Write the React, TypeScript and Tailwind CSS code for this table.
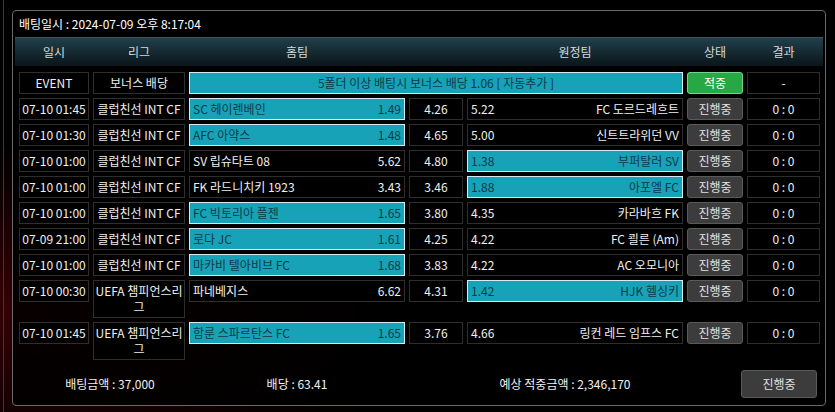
import React from "react";

type Row = {
  time: string;
  league: string;
  home: string;
  homeOdd: string;
  draw: string;
  away: string;
  awayOdd: string;
  pick: "home" | "away";
};

const rows: Row[] = [
  { time: "07-10 01:45", league: "클럽친선 INT CF", home: "SC 헤이렌베인", homeOdd: "1.49", draw: "4.26", away: "FC 도르드레흐트", awayOdd: "5.22", pick: "home" },
  { time: "07-10 01:30", league: "클럽친선 INT CF", home: "AFC 아약스", homeOdd: "1.48", draw: "4.65", away: "신트트라위던 VV", awayOdd: "5.00", pick: "home" },
  { time: "07-10 01:00", league: "클럽친선 INT CF", home: "SV 립슈타트 08", homeOdd: "5.62", draw: "4.80", away: "부퍼탈러 SV", awayOdd: "1.38", pick: "away" },
  { time: "07-10 01:00", league: "클럽친선 INT CF", home: "FK 라드니치키 1923", homeOdd: "3.43", draw: "3.46", away: "아포엘 FC", awayOdd: "1.88", pick: "away" },
  { time: "07-10 01:00", league: "클럽친선 INT CF", home: "FC 빅토리아 플젠", homeOdd: "1.65", draw: "3.80", away: "카라바흐 FK", awayOdd: "4.35", pick: "home" },
  { time: "07-09 21:00", league: "클럽친선 INT CF", home: "로다 JC", homeOdd: "1.61", draw: "4.25", away: "FC 쾰른 (Am)", awayOdd: "4.22", pick: "home" },
  { time: "07-10 01:00", league: "클럽친선 INT CF", home: "마카비 텔아비브 FC", homeOdd: "1.68", draw: "3.83", away: "AC 오모니아", awayOdd: "4.22", pick: "home" },
  { time: "07-10 00:30", league: "UEFA 챔피언스리그", home: "파네베지스", homeOdd: "6.62", draw: "4.31", away: "HJK 헬싱키", awayOdd: "1.42", pick: "away" },
  { time: "07-10 01:45", league: "UEFA 챔피언스리그", home: "함룬 스파르탄스 FC", homeOdd: "1.65", draw: "3.76", away: "링컨 레드 임프스 FC", awayOdd: "4.66", pick: "home" },
];

const cell = "h-[22px] border border-[#2e2e2e] bg-black flex items-center";
const picked = "h-[22px] border border-[#d4ecf0] bg-[#17a2b8] text-[#0c3a47] flex items-center";

function StatusButton({ label, win }: { label: string; win?: boolean }) {
  return (
    <div
      className={`w-[56px] h-[22px] rounded-[3px] border flex items-center justify-center ${
        win
          ? "bg-[#28a745] border-[#74d48c] text-white"
          : "bg-[#3c3c3c] border-[#5a5a5a] text-[#e2e2e2]"
      }`}
    >
      {label}
    </div>
  );
}

export default function App() {
  return (
    <div className="w-[835px] h-[412px] bg-black bg-[radial-gradient(ellipse_at_4%_75%,rgba(120,0,10,0.45),transparent_38%)] font-['Noto_Sans_CJK_KR',sans-serif] text-[12px] leading-[16px] text-[#f0f0f0] overflow-hidden">
      <div className="h-full border-l border-[#3a3a3a] ml-[3px] pl-[8px] pt-[10px]">
        {/* main panel */}
        <div className="w-[814px] h-[396px] border border-[#6a6a6a] rounded-[4px] bg-black/85 px-[2px] flex flex-col">
          <div className="h-[26px] flex items-center pl-[4px] text-white">
            배팅일시 : 2024-07-09 오후 8:17:04
          </div>

          {/* header */}
          <div className="h-[29px] flex items-center gap-[4px] pl-[4px] border-t border-[#3d5560] bg-gradient-to-b from-[#21404c] to-[#0a161b] text-[#d4dadc]">
            <div className="w-[70px] text-center">일시</div>
            <div className="w-[92px] text-center">리그</div>
            <div className="w-[216px] text-center">홈팀</div>
            <div className="w-[54px]" />
            <div className="w-[216px] text-center">원정팀</div>
            <div className="w-[56px] text-center">상태</div>
            <div className="w-[73px] text-center">결과</div>
          </div>

          {/* rows */}
          <div className="flex flex-col gap-[4px] pl-[4px] pt-[6px]">
            <div className="flex gap-[4px] items-start">
              <div className={`${cell} w-[70px] justify-center`}>EVENT</div>
              <div className={`${cell} w-[92px] justify-center`}>보너스 배당</div>
              <div className={`${picked} w-[494px] justify-center`}>
                5폴더 이상 배팅시 보너스 배당 1.06 [ 자동추가 ]
              </div>
              <StatusButton label="적중" win />
              <div className={`${cell} w-[73px] justify-center`}>-</div>
            </div>

            {rows.map((r, i) => (
              <div key={i} className="flex gap-[4px] items-start">
                <div className={`${cell} w-[70px] justify-center`}>{r.time}</div>
                <div className="w-[92px] min-h-[22px] border border-[#2e2e2e] bg-black py-[2px] text-center">
                  {r.league}
                </div>
                <div className={`${r.pick === "home" ? picked : cell} w-[216px] justify-between px-[3px]`}>
                  <span>{r.home}</span>
                  <span>{r.homeOdd}</span>
                </div>
                <div className={`${cell} w-[54px] justify-center`}>{r.draw}</div>
                <div className={`${r.pick === "away" ? picked : cell} w-[216px] justify-between px-[3px]`}>
                  <span>{r.awayOdd}</span>
                  <span>{r.away}</span>
                </div>
                <StatusButton label="진행중" />
                <div className={`${cell} w-[73px] justify-center`}>0 : 0</div>
              </div>
            ))}
          </div>

          {/* footer */}
          <div className="mt-auto mb-[7px] flex items-center">
            <div className="w-[190px] text-center">배팅금액 : 37,000</div>
            <div className="w-[184px] text-center">배당 : 63.41</div>
            <div className="w-[352px] text-center">예상 적중금액 : 2,346,170</div>
            <div className="w-[76px] h-[28px] rounded-[3px] border border-[#5a5a5a] bg-[#3c3c3c] text-[#e2e2e2] flex items-center justify-center">
              진행중
            </div>
          </div>
        </div>
      </div>
    </div>
  );
}
